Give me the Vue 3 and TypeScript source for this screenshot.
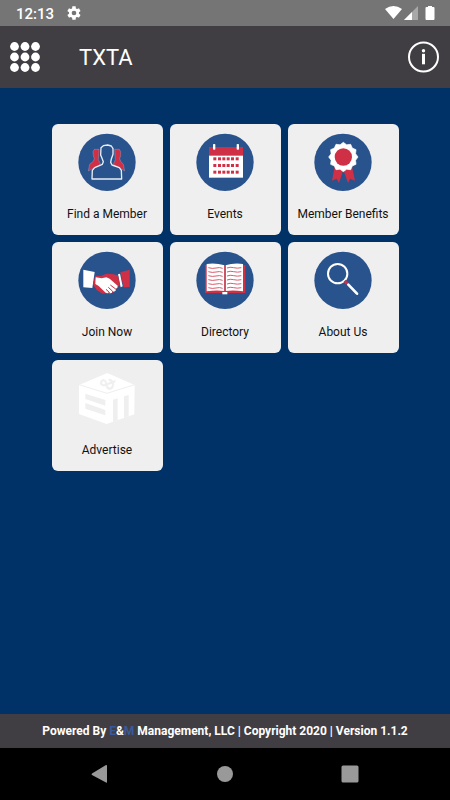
<script setup lang="ts">
type IconName = 'members' | 'events' | 'benefits' | 'join' | 'directory' | 'about' | 'advertise'

interface Tile {
  label: string
  icon: IconName
}

const tiles: Tile[] = [
  { label: 'Find a Member', icon: 'members' },
  { label: 'Events', icon: 'events' },
  { label: 'Member Benefits', icon: 'benefits' },
  { label: 'Join Now', icon: 'join' },
  { label: 'Directory', icon: 'directory' },
  { label: 'About Us', icon: 'about' },
  { label: 'Advertise', icon: 'advertise' },
]

// Rows and columns of the day markers on the calendar icon
const dayRows: number[] = [112, 132, 152]
const dayCols: number[] = [142, 156, 169, 182, 195, 209]

// Text lines on the two pages of the book icon
const bookLines: number[] = [89, 101, 113, 125, 137, 149]

// Outline of the rosette: soft scallops round its centre
const rosette: string = Array.from({ length: 24 }, (_, i) => {
  const radius = i % 2 === 0 ? 44 : 38
  const angle = (i * Math.PI) / 12
  return `${(178 + radius * Math.sin(angle)).toFixed(1)},${(111 - radius * Math.cos(angle)).toFixed(1)}`
}).join(' ')
</script>

<template>
  <div class="screen">
    <div class="status">
      <span class="clock">12:13</span>
      <svg class="gear" viewBox="0 0 24 24" aria-hidden="true">
        <path
          fill="#fff"
          fill-rule="evenodd"
          d="M19.4 13a7.5 7.5 0 0 0 0-2l2.1-1.6c.2-.2.3-.4.1-.7l-2-3.4c-.1-.2-.4-.3-.6-.2l-2.5 1a7.3 7.3 0 0 0-1.7-1L14.5 2.4c0-.2-.2-.4-.5-.4h-4c-.3 0-.5.2-.5.4L9.1 5.1a7.7 7.7 0 0 0-1.7 1l-2.5-1c-.2-.1-.5 0-.6.2l-2 3.4c-.1.2-.1.5.1.7L4.600 11a7.900 7.900 0 0 0 0 2l-2.200 1.600c-.2.2-.2.4-.1.7l2 3.4c.1.2.4.3.6.2l2.5-1c.5.4 1.1.8 1.7 1l.4 2.7c0 .2.2.4.5.4h4c.3 0 .5-.2.5-.4l.3-2.7a7.3 7.3 0 0 0 1.7-1l2.5 1c.2.1.5 0 .6-.2l2-3.4c.1-.2.1-.5-.1-.7zM12 15.5a3.5 3.5 0 1 1 0-7 3.5 3.5 0 0 1 0 7z"
        />
      </svg>
      <svg class="signals" viewBox="0 0 50 16" aria-hidden="true">
        <path fill="#fff" d="M0 4Q8.5-2 17 4L8.5 14z" />
        <path fill="#a8a8a8" d="M33 1v14H19z" />
        <path fill="#fff" d="M27 7v8H19z" />
        <path fill="#fff" d="M43 1h4v1h1.5q1 0 1 1v11q0 1-1 1h-7q-1 0-1-1V3q0-1 1-1H43z" />
      </svg>
    </div>

    <header class="bar">
      <button class="icon-button" type="button" aria-label="Menu">
        <svg class="grid-icon" viewBox="0 0 30 30" fill="#fff" aria-hidden="true">
          <template v-for="y in 3" :key="y">
            <circle v-for="x in 3" :key="x" :cx="x * 10.5 - 6" :cy="y * 10.5 - 6" r="4.4" />
          </template>
        </svg>
      </button>
      <h1 class="title">TXTA</h1>
      <button class="icon-button" type="button" aria-label="Information">
        <svg class="info-icon" viewBox="0 0 32 32" aria-hidden="true">
          <circle cx="15.5" cy="16" r="14.5" fill="none" stroke="#fff" stroke-width="2" />
          <circle cx="15.5" cy="9.8" r="1.7" fill="#fff" />
          <rect x="14" y="12.8" width="3" height="10.5" fill="#fff" />
        </svg>
      </button>
    </header>

    <main class="content">
      <div class="tiles">
        <button v-for="tile in tiles" :key="tile.icon" class="tile" type="button">
          <svg class="tile-icon" viewBox="87 36 180 180" aria-hidden="true">
            <circle v-if="tile.icon !== 'advertise'" cx="177" cy="127" r="86" fill="#29538d" />

            <g v-if="tile.icon === 'members'" stroke-linejoin="round">
              <path
                fill="#d03045"
                stroke="#a9bcd8"
                stroke-width="1"
                d="M153 88l-14 0-4 7 1 12 3 9-3 8-11 9-4 20 14-8 18-6 4-8-6-12 1-14zM200 88l14 0 4 7 0 12-3 9 3 8 8 9 4 20-13-8-16-6-4-8 5-12-1-14z"
              />
              <path
                fill="#29538d"
                stroke="#e8eef6"
                stroke-width="4"
                d="M132 177l1-26 7-8 23-10 3-8-4-10-4-10 1-22 7-6 13-2 11 3 5 8 0 17-5 14-2 10 4 8 22 8 6 8 1 26z"
              />
            </g>

            <g v-else-if="tile.icon === 'events'">
              <rect x="129" y="81" width="102" height="92" fill="#fff" />
              <rect x="129" y="81" width="102" height="26" fill="#d03045" />
              <rect x="141" y="72" width="7" height="17" rx="2" fill="#fff" />
              <rect x="212" y="72" width="7" height="17" rx="2" fill="#fff" />
              <template v-for="y in dayRows" :key="y">
                <rect v-for="x in dayCols" :key="x" :x="x" :y="y" width="9" height="9" fill="#d03045" />
              </template>
            </g>

            <g v-else-if="tile.icon === 'benefits'">
              <path fill="#d03045" d="M152 140l25 12-12 37-7-13-14 6zM204 140l-25 12 13 37 6-13 15 6z" />
              <polygon :points="rosette" fill="#fff" stroke="#fff" stroke-width="2" stroke-linejoin="round" />
              <circle cx="178" cy="111" r="26" fill="#d03045" />
            </g>

            <g v-else-if="tile.icon === 'join'">
              <path fill="#fff" d="M106 95l34 7-7 48-27-2z" />
              <path fill="#d03045" d="M245 95l-28 8 10 45 18-1z" />
              <path fill="#fff" d="M210 109l6-2 8 38-6 3z" />
              <path
                fill="#d03045"
                d="M142 113l17 1 16-7 17 1 18 4 6 29-9 8-10 13-12 7-11-3-11 1-16-10-9-13-3-6z"
              />
              <path
                fill="#fff"
                d="M143 118l18 3 14-3 10 4 24 21-1 7-6 2 2 5-6 4-5-2-1 5-6 2-4-3-3 3-6-2-21-20-10-6z"
              />
              <path
                fill="none"
                stroke="#d03045"
                stroke-width="3"
                d="M187 141l16 12M181 148l13 12M174 154l11 10"
              />
            </g>

            <g v-else-if="tile.icon === 'directory'">
              <path fill="#d03045" d="M117 81h121v84H117z" />
              <path fill="#fff" d="M122 78q26-4 54 4v77q-28-3-54 1zM178 82q26-8 53-4v82q-26-4-53-1z" />
              <g fill="none" stroke="#dc5969" stroke-width="3">
                <path
                  v-for="y in bookLines"
                  :key="y"
                  :d="`M127 ${y}q12 4 23 1t20 1M183 ${y + 1}q9-4 20-1t23 0`"
                />
              </g>
              <path stroke="#b0243c" stroke-width="4" d="M177 81v78" />
              <path fill="#fff" d="M169 162h15v7h-15z" />
            </g>

            <g v-else-if="tile.icon === 'about'" fill="none">
              <circle cx="161" cy="107" r="29" stroke="#fff" stroke-width="6" />
              <path stroke="#d03045" stroke-width="9" d="M182 128l8 9" />
              <path stroke="#fff" stroke-width="8" stroke-linecap="round" d="M193 140l26 27" />
            </g>

            <g v-else>
              <path fill="#fff" d="M93 87l85-36 82 36-1 88-83 29-83-30z" />
              <path fill="none" stroke="#efefef" stroke-width="3" d="M93 86l84 26 83-26" />
              <path
                fill="#efefef"
                d="M112 113l60 19v17l-60-20zM112 141l60 21v16l-60-20zM195 131l14-4v66l-14 5zM228 121l14-4v64l-14 5z"
              />
              <text class="ampersand" transform="rotate(-70 178 82)" x="178" y="102">&amp;</text>
            </g>
          </svg>
          <span class="tile-label">{{ tile.label }}</span>
        </button>
      </div>
    </main>

    <footer class="credits">
      Powered By <span class="brand">E</span>&amp;<span class="brand">M</span> Management, LLC | Copyright 2020 |
      Version 1.1.2
    </footer>

    <nav class="system-nav" aria-label="System">
      <button class="icon-button" type="button" aria-label="Back">
        <svg class="nav-icon" viewBox="0 0 20 20" fill="#999" aria-hidden="true">
          <path d="M17 2v16q0 1-1 .5L2 11q-1-1 0-1.500L16 1q1-.3 1 1z" />
        </svg>
      </button>
      <button class="icon-button" type="button" aria-label="Home">
        <svg class="nav-icon" viewBox="0 0 20 20" fill="#999" aria-hidden="true">
          <circle cx="10" cy="10" r="8" />
        </svg>
      </button>
      <button class="icon-button" type="button" aria-label="Recent apps">
        <svg class="nav-icon" viewBox="0 0 20 20" fill="#999" aria-hidden="true">
          <rect x="1.5" y="1.5" width="17" height="17" rx="1.5" />
        </svg>
      </button>
    </nav>
  </div>
</template>

<style>
body {
  margin: 0;
}
</style>

<style scoped>
.screen {
  display: flex;
  flex-direction: column;
  min-height: 100vh;
  background: #003268;
  font-family: Roboto, "Liberation Sans", sans-serif;
}

button {
  padding: 0;
  border: 0;
  font: inherit;
  cursor: pointer;
}

svg {
  display: block;
}

.status {
  display: flex;
  align-items: center;
  gap: 12px;
  height: 26px;
  padding: 0 15px 0 16px;
  background: #757575;
  color: #fff;
}

.clock {
  font-size: 15px;
  font-weight: 500;
  line-height: 18px;
  padding-top: 2px;
}

.gear {
  width: 16px;
  height: 16px;
}

.signals {
  width: 50px;
  height: 16px;
  margin-left: auto;
}

.bar {
  display: flex;
  align-items: center;
  height: 62px;
  padding: 0 10px;
  background: #413e43;
  color: #fff;
}

.icon-button {
  background: none;
}

.grid-icon {
  width: 30px;
  height: 30px;
}

.info-icon {
  width: 32px;
  height: 32px;
}

.title {
  flex: 1;
  margin: 0;
  padding: 2px 0 0 39px;
  font-size: 22px;
  font-weight: 400;
  line-height: 32px;
}

.content {
  flex: 1;
  padding: 36px 16px;
}

.tiles {
  display: grid;
  grid-template-columns: repeat(3, 111px);
  justify-content: center;
  gap: 7px;
}

.tile {
  display: flex;
  flex-direction: column;
  align-items: center;
  gap: 13px;
  height: 111px;
  padding-top: 8px;
  border-radius: 6px;
  background: #efefef;
  color: #111;
}

.tile-icon {
  width: 60px;
  height: 60px;
}

.tile-label {
  font-size: 12px;
  line-height: 18px;
  white-space: nowrap;
}

.ampersand {
  fill: #efefef;
  font-size: 58px;
  font-weight: 500;
  text-anchor: middle;
}

.credits {
  padding: 8px 12px;
  background: #413e43;
  color: #fff;
  font-size: 12px;
  font-weight: 700;
  line-height: 18px;
  text-align: center;
}

.brand {
  color: #395a9a;
}

.system-nav {
  display: flex;
  justify-content: center;
  align-items: center;
  gap: 105px;
  height: 52px;
  background: #000;
}

.nav-icon {
  width: 20px;
  height: 20px;
}
</style>
